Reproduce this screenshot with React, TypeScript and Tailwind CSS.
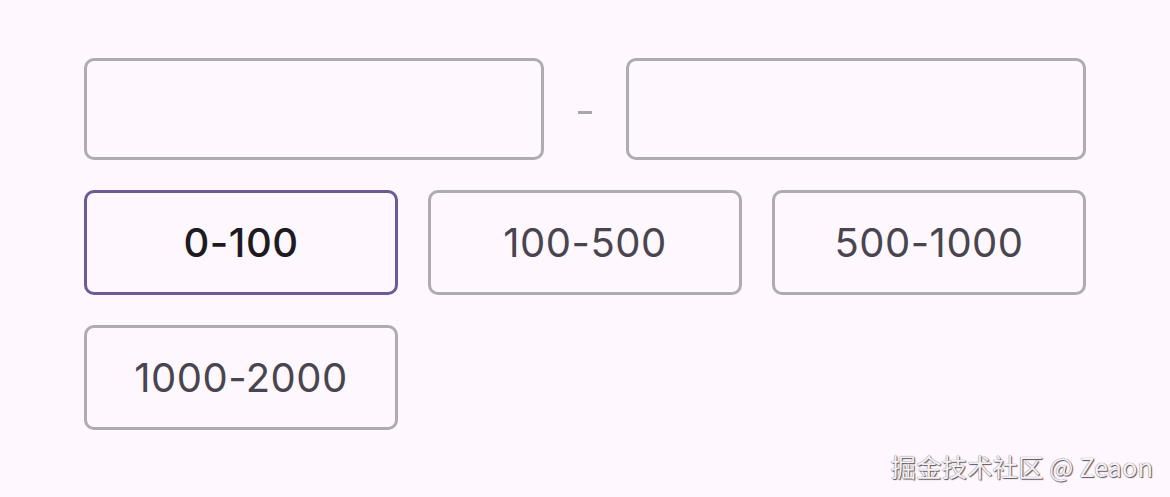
const ranges = ["0-100", "100-500", "500-1000", "1000-2000"];

export default function App() {
  const selected = "0-100";

  return (
    <div
      className="relative w-[1170px] h-[497px] bg-[#fef7fe] overflow-hidden"
      style={{ fontFamily: "Inter, Roboto, 'Noto Sans', sans-serif" }}
    >
      <div className="flex flex-col pl-[84px] pt-[58px] w-[1086px]">
        {/* min / max inputs */}
        <div className="flex items-center">
          <div className="w-[460px] h-[102px] rounded-[10px] border-[3px] border-[#afabb1]" />
          <div className="flex-1 flex justify-center pt-[7px]">
            <span className="block w-[14px] h-[3px] bg-[#a9a5ab]" />
          </div>
          <div className="w-[460px] h-[102px] rounded-[10px] border-[3px] border-[#afabb1]" />
        </div>

        {/* preset ranges */}
        <div className="grid grid-cols-3 gap-x-[30px] gap-y-[30px] mt-[30px]">
          {ranges.map((r) => {
            const active = r === selected;
            return (
              <div
                key={r}
                className={
                  active
                    ? "h-[105px] rounded-[10px] border-[3px] border-[#6a5b94] flex items-center justify-center text-[40px] font-medium text-[#1d1b20] tracking-[0.5px]"
                    : "h-[105px] rounded-[10px] border-[3px] border-[#afabb1] flex items-center justify-center text-[40px] text-[#49454f] tracking-[0.5px]"
                }
              >
                {r}
              </div>
            );
          })}
        </div>
      </div>

      <div
        className="absolute right-[17px] bottom-[19px] text-[25.5px] text-[#f4f0f4] leading-none"
        style={{
          fontFamily: "'Noto Sans CJK SC', 'Liberation Sans', sans-serif",
          textShadow: "1px 1px 1px #5a575c, 0 0 1px #5a575c",
        }}
      >
        掘金技术社区 @ Zeaon
      </div>
    </div>
  );
}
